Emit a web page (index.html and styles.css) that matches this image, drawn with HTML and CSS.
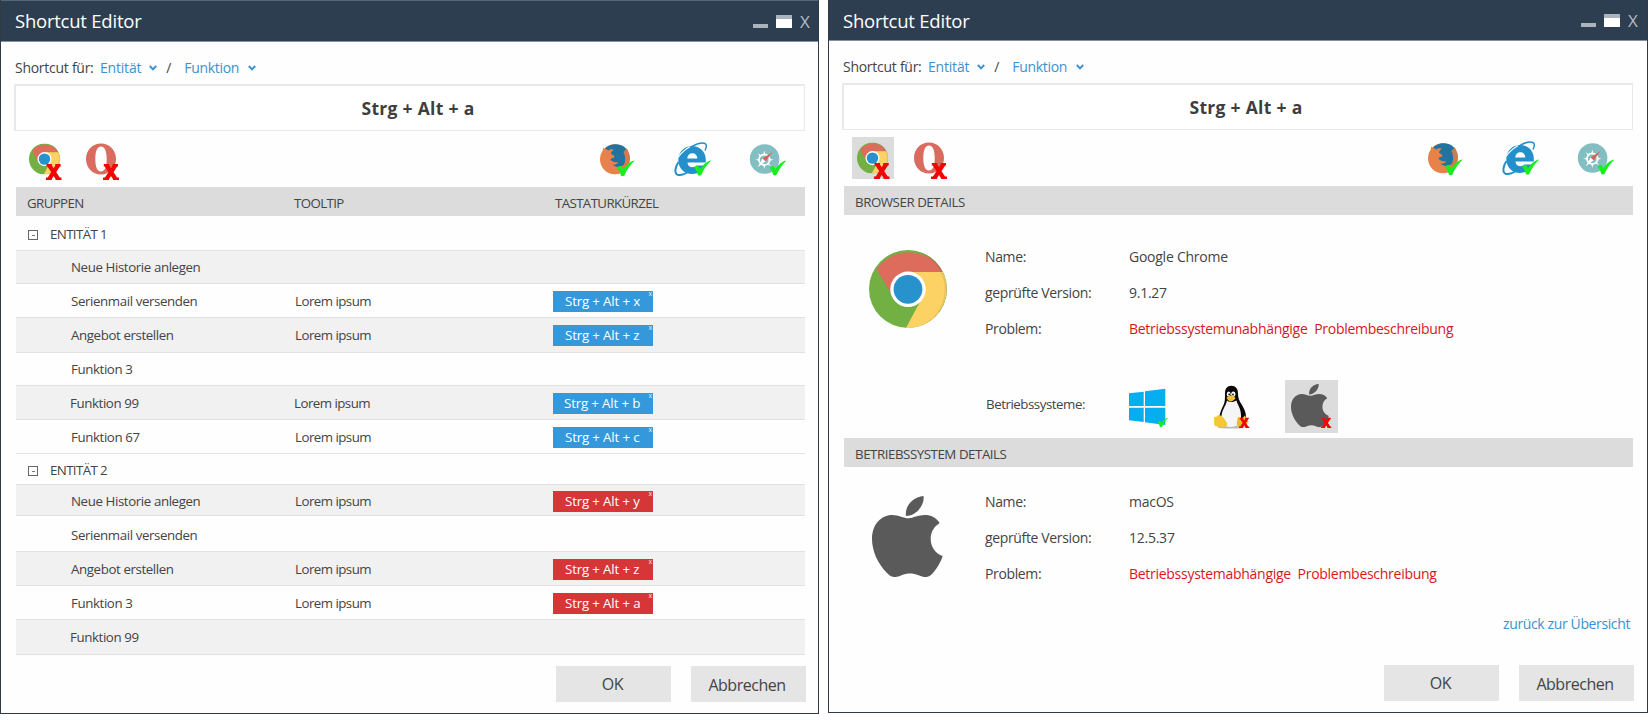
FILE: index.html
```html
<!DOCTYPE html>
<html lang="de">
<head>
<meta charset="utf-8">
<title>Shortcut Editor</title>
<link rel="stylesheet" href="styles.css">
</head>
<body>
<svg class="defs" width="0" height="0" aria-hidden="true">
  <defs>
    <symbol id="logo-chrome" viewBox="0 0 78 78">
      <circle cx="39" cy="39" r="39" fill="#72b043"/>
      <path d="M7.5 19.3A39 39 0 0 1 73.5 22H39L22 43Z" fill="#de6c5d"/>
      <path d="M73.5 22A39 39 0 0 1 37 78L53.5 47L39 22Z" fill="#fdd265"/>
      <path d="M50 2A39 39 0 0 1 73.5 22H72A40 40 0 0 0 50 2Z" fill="#c96455"/>
      <path d="M73.5 22A39 39 0 0 1 45 77.5A39 39 0 0 0 71.5 22Z" fill="#efc25c"/>
      <circle cx="39" cy="39.3" r="17.7" fill="#fff"/>
      <circle cx="39" cy="39.3" r="14.4" fill="#2892cc"/>
    </symbol>
    <symbol id="logo-apple" viewBox="0 0 71 81">
      <path d="M51.5 0C53 9 44 20 34 20C32.5 10 41 1 51.5 0Z"/>
      <path d="M37 22.3C41 22 46 19 53 19C59 19 64 21.5 67.7 27C62 30.5 58.7 36 58.7 43C58.7 51 63.5 57.5 70.7 60C68 68 63.5 74.5 59.5 78.5C55.5 82.5 50.5 81 46.5 79.3C41 77 35 77 29.5 79.3C24 81.8 19.5 82 15 77C6 68 0 55 0 43C0 28 9.5 19 20 19C27 19 32 22.5 37 22.3Z"/>
    </symbol>
    <symbol id="mark-fail" viewBox="0 0 16 16">
      <path d="M3.4 1L12.4 15M12.6 1L3.6 15" stroke="#f10505" stroke-width="4.2" fill="none"/>
      <path d="M.8 1.2H6.2M9.6 1.2H15M0 14.8H6M10 14.8H16" stroke="#f10505" stroke-width="2.4" fill="none"/>
    </symbol>
    <symbol id="mark-ok" viewBox="0 0 18 16">
      <path d="M0 7.5C1.6 6 3 5.4 4.4 6C5.200 6.800 5.600 8 6.200 9C9 5.200 13 1 18 0C13.600 4 10 9.400 7.200 15.600C6 16.200 5 16 4 15.400C3.200 12.600 2 9.600 0 7.500Z" fill="#17ee1f"/>
    </symbol>
    <symbol id="tile-chrome" viewBox="0 0 42 42">
      <use href="#logo-chrome" x="5" y="5.5" width="31" height="31"/>
      <use href="#mark-fail" x="21.7" y="26" width="16" height="16"/>
    </symbol>
    <symbol id="tile-opera" viewBox="0 0 42 42">
      <path fill-rule="evenodd" fill="#da6b5f" d="M21 5.5C29.5 5.5 36 12.3 36 21S29.5 36.5 21 36.5S6 29.7 6 21S12.5 5.5 21 5.5ZM21 8.5C17 8.5 15.3 13.500 15.300 21S17 33.500 21 33.500S26.700 28.500 26.700 21S25 8.500 21 8.500Z"/>
      <use href="#mark-fail" x="23" y="26" width="16" height="16"/>
    </symbol>
    <symbol id="tile-firefox" viewBox="0 0 42 42">
      <circle cx="21" cy="21.3" r="15" fill="#e6824a"/>
      <path d="M11 10.5C15 5.5 25 4.5 30.5 9C35 13 35 21 31.5 25.5C28 29.5 22 30 18.5 26.8C21 27 24 26 24 24C21 24.5 18 24 16.5 21.5C17.5 19.8 20 20.5 20.5 18.5C20.5 17.5 17.5 16.500 17 15.500C17.200 13.500 19 13 19.500 11.500C17 11 15.500 11.700 14.500 12.500Z" fill="#22739f"/>
      <path d="M9.3 9.5C8.8 12 8.5 14 9 16.5L14.5 12.8C12.5 12.2 10.6 11 9.3 9.5Z" fill="#e6824a"/>
      <path d="M29.5 14C31 12.500 32 11.500 32.600 10C34.500 13 36 17 36 21C35 26 32 29 28.500 30C31.500 25 32 19 29.500 14Z" fill="#cf7d4e"/>
      <use href="#mark-ok" x="23" y="22.3" width="18" height="16"/>
    </symbol>
    <symbol id="tile-ie" viewBox="0 0 42 42">
      <path fill-rule="evenodd" fill="#2490cb" d="M22 8C29.5 8 35.800 13.500 35.800 21.500V24.600H17.500C17.700 27.500 19.500 29.200 22 29.200C24 29.200 25.500 28.600 26.300 27.500H35C33 33 28 36 22 36C14 36 8.300 30 8.300 22S14.500 8 22 8ZM17.300 20.400H27.300C27.200 17.200 25.200 15.200 22.300 15.200S17.500 17.200 17.300 20.400Z"/>
      <path d="M10 19C17 10 29 3 35 5.5C37 6.500 36.500 9.500 35 12.500" fill="none" stroke="#2490cb" stroke-width="1.500"/>
      <path d="M8.500 24C4.500 30 4.500 35.500 7.500 36.700C10.500 37.600 15 36 18.500 33.500" fill="none" stroke="#2490cb" stroke-width="2"/>
      <path d="M8 19.500C11 15 16 11 20 8.500" fill="none" stroke="#fff" stroke-width="1.200"/>
      <use href="#mark-ok" x="24" y="22.3" width="17.5" height="15.5"/>
    </symbol>
    <symbol id="tile-safari" viewBox="0 0 42 42">
      <circle cx="20.6" cy="21" r="14.8" fill="#82bec2"/>
      <circle cx="20.3" cy="21.7" r="5.4" fill="none" stroke="#fff" stroke-width="1.7"/>
      <path d="M20.300 12.500L21.500 17.500H19.100ZM20.300 31L21.500 26H19.100ZM11.200 21.700L16 20.500V22.900ZM29.500 21.700L24.600 20.500V22.900ZM13.800 15.300L17.700 17.500L16.200 18.900ZM27 28.200L23 26L24.500 24.500Z" fill="#fff"/>
      <path d="M13.500 29.500L18.700 20.600L21.700 23.200Z" fill="#fff"/>
      <path d="M28.500 14L18.700 20.600L21.700 23.200Z" fill="#d9604f"/>
      <use href="#mark-ok" x="25.5" y="22.3" width="17" height="15.5"/>
    </symbol>
    <symbol id="chevron" viewBox="0 0 8 6"><path d="M.8 1L4 4.400L7.200 1" fill="none" stroke="#3a93cc" stroke-width="2"/></symbol>
  </defs>
</svg>

<div class="desktop">
  <section class="window window-list">
    <header class="titlebar">
      <h1 class="title">Shortcut Editor</h1>
      <div class="controls"><span class="min"></span><span class="max"></span><span class="close">X</span></div>
    </header>
    <div class="content">
      <nav class="crumbs">
        <span class="crumb-label">Shortcut für:</span>
        <a class="crumb crumb-entity">Entität</a><svg class="chevron"><use href="#chevron"/></svg>
        <span class="slash">/</span>
        <a class="crumb">Funktion</a><svg class="chevron chevron-last"><use href="#chevron"/></svg>
      </nav>
      <div class="field">Strg + Alt + a</div>
      <div class="browsers">
        <svg class="tile"><use href="#tile-chrome"/></svg>
        <svg class="tile tile-opera"><use href="#tile-opera"/></svg>
        <svg class="tile tile-firefox"><use href="#tile-firefox"/></svg>
        <svg class="tile tile-ie"><use href="#tile-ie"/></svg>
        <svg class="tile tile-safari"><use href="#tile-safari"/></svg>
      </div>
      <div class="bar columns"><span class="caps">GRUPPEN</span><span class="caps">TOOLTIP</span><span class="caps keys">TASTATURKÜRZEL</span></div>

      <div class="group first"><span class="toggle"></span><span class="caps">ENTITÄT 1</span></div>
      <div class="row odd h33"><span>Neue Historie anlegen</span></div>
      <div class="row h34 low"><span>Serienmail versenden</span><span class="tip">Lorem ipsum</span><span class="chip">Strg + Alt + x<i>x</i></span></div>
      <div class="row odd h35 low"><span>Angebot erstellen</span><span class="tip">Lorem ipsum</span><span class="chip">Strg + Alt + z<i>x</i></span></div>
      <div class="row h33"><span>Funktion 3</span></div>
      <div class="row odd h34 low"><span class="out">Funktion 99</span><span class="tip out">Lorem ipsum</span><span class="chip chip-out">Strg + Alt + b<i>x</i></span></div>
      <div class="row h34 low"><span>Funktion 67</span><span class="tip">Lorem ipsum</span><span class="chip">Strg + Alt + c<i>x</i></span></div>
      <div class="group second"><span class="toggle"></span><span class="caps">ENTITÄT 2</span></div>
      <div class="row odd h31"><span>Neue Historie anlegen</span><span class="tip">Lorem ipsum</span><span class="chip conflict">Strg + Alt + y<i>x</i></span></div>
      <div class="row h36 lower"><span>Serienmail versenden</span></div>
      <div class="row odd h34 low"><span>Angebot erstellen</span><span class="tip">Lorem ipsum</span><span class="chip conflict">Strg + Alt + z<i>x</i></span></div>
      <div class="row h34 low"><span>Funktion 3</span><span class="tip">Lorem ipsum</span><span class="chip conflict">Strg + Alt + a<i>x</i></span></div>
      <div class="row odd h36 low last"><span class="out">Funktion 99</span></div>
      <footer class="actions"><button class="btn ok">OK</button><button class="btn cancel">Abbrechen</button></footer>
    </div>
  </section>

  <section class="window window-details">
    <header class="titlebar">
      <h1 class="title">Shortcut Editor</h1>
      <div class="controls"><span class="min"></span><span class="max"></span><span class="close">X</span></div>
    </header>
    <div class="content">
      <nav class="crumbs">
        <span class="crumb-label">Shortcut für:</span>
        <a class="crumb crumb-entity">Entität</a><svg class="chevron"><use href="#chevron"/></svg>
        <span class="slash">/</span>
        <a class="crumb">Funktion</a><svg class="chevron chevron-last"><use href="#chevron"/></svg>
      </nav>
      <div class="field">Strg + Alt + a</div>
      <div class="browsers">
        <svg class="tile selected"><use href="#tile-chrome"/></svg>
        <svg class="tile tile-opera"><use href="#tile-opera"/></svg>
        <svg class="tile tile-firefox"><use href="#tile-firefox"/></svg>
        <svg class="tile tile-ie"><use href="#tile-ie"/></svg>
        <svg class="tile tile-safari"><use href="#tile-safari"/></svg>
      </div>
      <div class="bar"><span class="caps wide">BROWSER DETAILS</span></div>
      <div class="details details-browser">
        <svg class="logo logo-chrome"><use href="#logo-chrome"/></svg>
        <span>Name:</span><span class="value">Google Chrome</span>
        <span>geprüfte Version:</span><span class="value">9.1.27</span>
        <span>Problem:</span><span class="problem">Betriebssystemunabhängige&nbsp; Problembeschreibung</span>
      </div>
      <div class="systems">
        <span class="systems-label">Betriebssysteme:</span>
        <svg class="os os-windows" viewBox="0 0 44 53">
          <path d="M1 13.300L15.700 11.800V26H1ZM17 11.300L37.300 8.700V26H17ZM1 27.700H15.700V42L1 40.300ZM17 27.700H37.300V45L17 42.300Z" fill="#05aeee"/>
          <use href="#mark-ok" x="29.5" y="37.3" width="11" height="10"/>
        </svg>
        <svg class="os os-linux" viewBox="0 0 40 53">
          <ellipse cx="19" cy="47" rx="14" ry="1.6" fill="#bbb"/>
          <path d="M19.300 5.800C23.800 5.800 26 9 26 13.500C26 18.500 27.500 21 30 25C33 30 35 35 33.500 41C32 46 8 46 7 41C6.500 36 9.500 29 11.500 25C13 22 13 19 13 13.500C13 9 15 5.800 19.300 5.800Z" fill="#090909"/>
          <path d="M15 20.500C18 23 22 22 24.500 20.500C25.500 25 29 28 29 36C29 43 25 47 18.500 47C12 47 9.500 42 9.500 37C9.500 30 14 26 15 20.500Z" fill="#f5f5f5"/>
          <ellipse cx="16.7" cy="14.2" rx="1.9" ry="2.6" fill="#fff"/>
          <ellipse cx="21.3" cy="14.2" rx="2.1" ry="2.7" fill="#fff"/>
          <circle cx="17.2" cy="14.5" r=".9"/><circle cx="21" cy="14.5" r=".9"/>
          <path d="M14.500 18C16 16 18 15.600 19.300 15.800C21 16 23 17 23.500 18.200C22.500 20 20 21.500 18.700 21.500C17 21.500 15.500 19.500 14.500 18Z" fill="#f5c22c"/>
          <path d="M6.500 35C9.500 34.500 12 38.500 14.500 42C16 44.500 14.500 47.500 11.500 47.500C8.500 47.300 4.500 46.500 2.500 45.500C1.500 43 2.500 40.500 2 37.500C3.500 36.500 5 37 6.500 35Z" fill="#f3c735"/>
          <path d="M26 36.500C28 39 31.500 38.500 32.500 35.500C34 37 36 40 36.500 42C34.500 44.500 31 47 28 47.300C25 47 24.500 44 25 41.500Z" fill="#eeb92c"/>
          <use href="#mark-fail" x="27" y="37.5" width="10.5" height="10.5"/>
        </svg>
        <svg class="os os-apple selected" viewBox="0 0 53 53">
          <use href="#logo-apple" x="6" y="3.7" width="38" height="43.6" fill="#5a5a5a"/>
          <use href="#mark-fail" x="36" y="37.5" width="10.5" height="10.5"/>
        </svg>
      </div>
      <div class="bar"><span class="caps wide">BETRIEBSSYSTEM DETAILS</span></div>
      <div class="details details-os">
        <svg class="logo logo-apple"><use href="#logo-apple"/></svg>
        <span>Name:</span><span class="value">macOS</span>
        <span>geprüfte Version:</span><span class="value">12.5.37</span>
        <span>Problem:</span><span class="problem">Betriebssystemabhängige&nbsp; Problembeschreibung</span>
      </div>
      <a class="back">zurück zur Übersicht</a>
      <footer class="actions"><button class="btn ok">OK</button><button class="btn cancel">Abbrechen</button></footer>
    </div>
  </section>
</div>
</body>
</html>
```
FILE: styles.css
```css
* { box-sizing: border-box; }
body {
  margin: 0;
  background: #fff;
  color: #444;
  font: 13.3px "Open Sans", "Noto Sans", sans-serif;
  letter-spacing: -0.4px;
  white-space: nowrap;
}
.defs { position: absolute; }
.desktop { display: flex; align-items: flex-start; gap: 9px; }
.window { width: 819px; height: 714px; border: 1px solid #303b46; border-top: 0; background: #fefefe; }
.window-details { width: 820px; height: 713px; }

.titlebar {
  display: flex; align-items: center; justify-content: space-between;
  height: 42px; padding: 0 8px 0 14px;
  background: #2d3e50; border-top: 1px solid #53677a; border-bottom: 1px solid #8592a0;
}
.window-details .titlebar { height: 41px; padding-right: 9px; border-top-color: #2d3e50; }
.title { margin: 0; color: #fff; font-size: 18.5px; font-weight: 400; line-height: 40px; letter-spacing: -0.23px; }
.controls { display: flex; align-items: flex-end; height: 13px; margin-top: 0; }
.min { width: 15px; height: 4px; background: #abb3bc; }
.max { width: 16px; height: 13px; margin: 0 8px; background: #fff; border-top: 4px solid #abb3bc; }
.close { width: 10px; color: #b4bbc2; font: 17px/13px "Open Sans", sans-serif; letter-spacing: 0; }

.content { padding: 0 13px 0 15px; }
.crumbs { display: flex; align-items: center; height: 42px; margin-left: -1px; padding-top: 9px; font-size: 14px; line-height: 33px; }
.crumb-label { width: 85px; letter-spacing: -0.27px; }
.crumb { color: #3a93cc; letter-spacing: -0.3px; }
.crumb-entity { letter-spacing: -0.2px; }
.chevron { width: 8px; height: 6px; margin-left: 8px; }
.chevron-last { margin-left: 9px; }
.slash { width: 6px; margin: 0 12px 0 9px; }
.field {
  height: 47px; margin-left: -2px; padding-top: 2px;
  border: 2px solid #e9e9e9; border-bottom-width: 1px; border-right-width: 1px; background: #fff;
  color: #3e3e3e; font-size: 17.5px; font-weight: 700; line-height: 40px; text-align: center; letter-spacing: 0.3px; text-indent: 16px;
}
.browsers { display: flex; height: 56px; padding: 7px 0 0 8px; }
.tile { width: 42px; height: 42px; overflow: visible; }
.tile-opera { margin-left: 14px; }
.tile-firefox { margin-left: auto; }
.tile-ie { margin-left: 34px; }
.tile-safari { margin: 0 19px 0 32px; }
.selected { background: #dcdcdc; }

.bar { height: 29px; padding: 2px 0 0 11px; background: #dcdcdc; line-height: 28px; }
.caps { letter-spacing: -0.62px; }
.wide { letter-spacing: -0.45px; }
.columns { display: grid; grid-template-columns: 267px 261px 1fr; }

.group { display: flex; align-items: flex-start; padding-left: 12px; line-height: 34px; }
.group.first { height: 34px; padding-top: 1px; }
.group.second { height: 31px; border-top: 1px solid #e4e4e4; line-height: 33px; }
.toggle { display: grid; place-items: center; width: 10px; height: 10px; margin: 13px 12px 0 0; border: 1px solid #666; }
.group.second .toggle { margin-top: 12px; }
.toggle::before { content: ""; width: 3px; height: 1px; background: #777; }

.row {
  display: grid; grid-template-columns: 224px 258px 1fr; align-items: start;
  height: 34px; padding-left: 55px; border-top: 1px solid #e2e2e2; line-height: 33px;
}
.odd { background: #f1f1f1; }
.h31 { height: 31px; }
.h33 { height: 33px; }
.h35 { height: 35px; }
.h36 { height: 36px; }
.low { padding-top: 1px; }
.lower { padding-top: 3px; }
.last { border-bottom: 1px solid #e2e2e2; }
.tip { letter-spacing: -0.53px; }
.out { margin-left: -1px; }
.chip {
  position: relative; width: 100px; height: 21px; margin-top: 6px; padding-left: 12px;
  background: #3498db; color: #fff; line-height: 21px; letter-spacing: -0.16px;
}
.chip-out { padding-left: 11px; }
.conflict { background: #d63637; }
.chip i { position: absolute; top: 0; right: 1px; font: 7px/5px "Open Sans", sans-serif; opacity: .85; }

.actions { display: flex; justify-content: flex-end; gap: 20px; margin: 11px -1px 0 0; }
.btn { width: 115px; height: 36px; padding: 0 2px 0 0; border: 0; background: #e5e5e5; color: #444; font: 16px/36px "Open Sans", sans-serif; letter-spacing: -0.48px; }
.cancel { padding: 2px 3px 0 0; line-height: 34px; }

.details { display: grid; grid-template-columns: 141px 144px 1fr; grid-auto-rows: 36px; font-size: 14px; line-height: 36px; letter-spacing: -0.36px; }
.details-browser { padding-top: 24px; }
.details-os { padding-top: 17px; }
.logo { grid-row: 1 / span 3; }
.logo-chrome { width: 78px; height: 78px; margin: 11px 0 0 25px; }
.logo-apple { width: 71px; height: 81px; margin: 12px 0 0 28px; fill: #5a5a5a; }
.value { letter-spacing: -0.25px; }
.problem { color: #d8171b; letter-spacing: -0.28px; }
.systems { display: flex; height: 91px; padding: 33px 0 5px 142px; }
.systems-label { width: 142px; line-height: 48px; letter-spacing: -0.46px; }
.os { height: 53px; }
.os-windows { width: 44px; }
.os-linux { width: 40px; margin: 0 33px 0 40px; }
.os-apple { width: 53px; }
.back { display: block; margin: 17px 3px 0 0; color: #3a93cc; font-size: 14px; line-height: 30px; text-align: right; letter-spacing: -0.38px; }
.window-details .content { padding-right: 14px; }
.window-details .actions { margin-top: 26px; }
```
